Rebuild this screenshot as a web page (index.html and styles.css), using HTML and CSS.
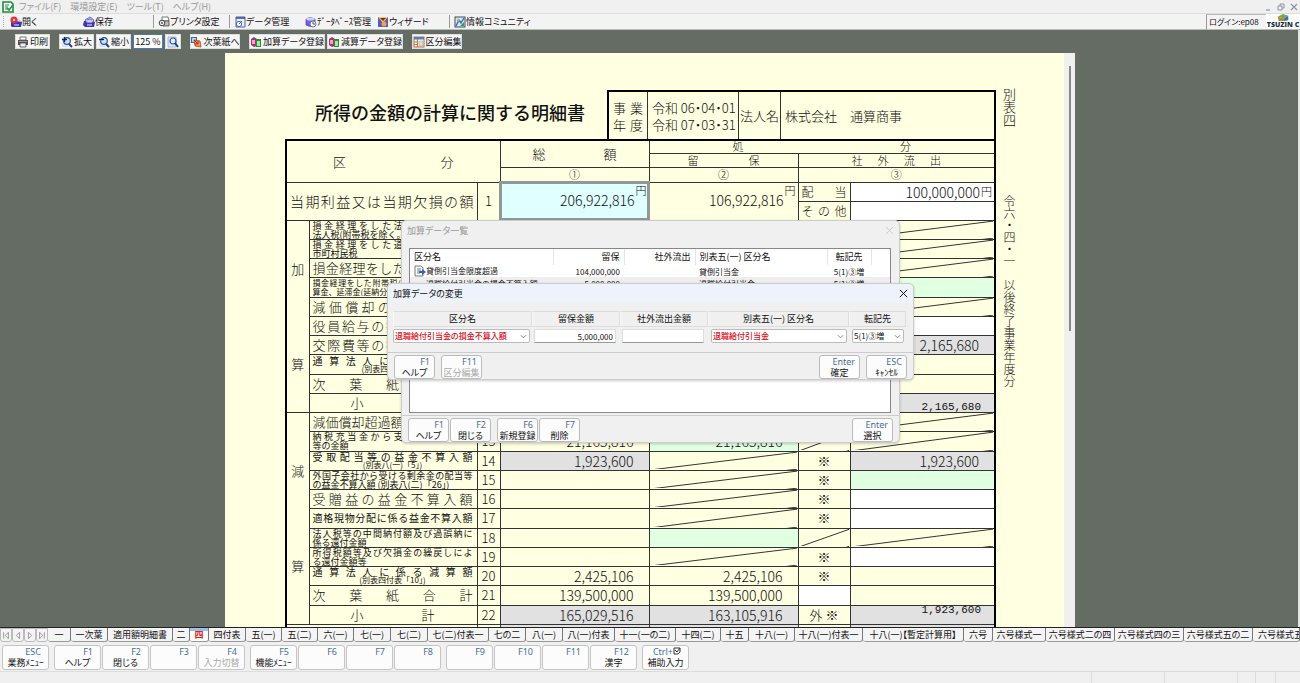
FILE: index.html
```html
<!DOCTYPE html>
<html lang="ja">
<head>
<meta charset="utf-8">
<title>別表四</title>
<link rel="stylesheet" href="styles.css">
</head>
<body>
<svg class="defs" aria-hidden="true">
  <symbol id="i-disk" viewBox="0 0 12 12"><path d="M1 5h8l3 1-1 5H2L0 9z" fill="#3b38a8"/><path d="M2 4l5-3 4 3-2 3H4z" fill="#c9ccf5" stroke="#4a48b8" stroke-width=".8"/><path d="M4 4l3-1 2 1" stroke="#6a68d0" fill="none"/><rect x="4" y="8" width="5" height="2" fill="#8f90e6"/></symbol>
  <symbol id="i-open" viewBox="0 0 12 12"><path d="M1 5h10l1 1-1 5H2L1 10z" fill="#3b38a8"/><path d="M5 5l4-3 3 4z" fill="#d4d6f8"/><circle cx="4" cy="4" r="3.5" fill="#e03040"/><circle cx="4" cy="4" r="1.2" fill="#ffc6c6"/><rect x="4" y="8" width="5" height="2" fill="#8f90e6"/></symbol>
  <symbol id="i-printset" viewBox="0 0 12 12"><path d="M4 1h6l1 4H4z" fill="#fff" stroke="#555" stroke-width=".8"/><path d="M3 5h8v5H5z" fill="#bbb" stroke="#444" stroke-width=".8"/><circle cx="4" cy="7" r="2.8" fill="#eee" stroke="#444"/><circle cx="4" cy="7" r="1" fill="#555"/></symbol>
  <symbol id="i-data" viewBox="0 0 12 12"><path d="M2 1h9v10H2z" fill="#e9ecfb" stroke="#4450a0" stroke-width=".9"/><path d="M2 2h9" stroke="#4450a0" stroke-width="1.6"/><circle cx="5" cy="8" r="2.6" fill="#fff" stroke="#3d65b8"/><path d="M5 8l3-3" stroke="#3d65b8"/></symbol>
  <symbol id="i-db" viewBox="0 0 12 12"><path d="M1 3q4-3 9 0v6q-4 3-9 0z" fill="#6f66d8" stroke="#3b38a8" stroke-width=".7"/><ellipse cx="5.5" cy="3" rx="4.3" ry="1.5" fill="#cfd0fa"/><circle cx="8" cy="8" r="3" fill="#f5f5ff" stroke="#5a58a8" stroke-width=".8"/><path d="M8 6v2h2" stroke="#333" fill="none" stroke-width=".8"/></symbol>
  <symbol id="i-wizard" viewBox="0 0 12 12"><rect x="1" y="1" width="10" height="10" fill="#5a58c8"/><path d="M1 1h10L6 7z" fill="#ffc55a"/><path d="M3 2l3 3 3-3" fill="#6b3a1a"/><circle cx="7" cy="8" r="2.5" fill="#e9a63a"/></symbol>
  <symbol id="i-info" viewBox="0 0 12 12"><rect x="1" y="1" width="10" height="10" fill="#d8ecff" stroke="#3a4a66"/><path d="M2 10l3-6 2 3 3-5" stroke="#2c6bc4" fill="none" stroke-width="1.4"/><circle cx="4" cy="4" r="1.5" fill="#f0b030"/><path d="M6 10l4-4v4z" fill="#37a050"/></symbol>
  <symbol id="i-print" viewBox="0 0 12 12"><path d="M3 1h6v3H3z" fill="#fff" stroke="#555" stroke-width=".8"/><path d="M1 4h10v5H1z" fill="#555"/><path d="M2 5h8v1H2z" fill="#999"/><path d="M3 7h6v4H3z" fill="#eee" stroke="#444" stroke-width=".8"/></symbol>
  <symbol id="i-zoomin" viewBox="0 0 12 12"><path d="M1 1h6v10H1z" fill="#dbe6fb"/><circle cx="6" cy="5" r="3.3" fill="#cfe0fb" stroke="#2a56a8" stroke-width="1.2"/><path d="M8 8l3 3" stroke="#1d3f8c" stroke-width="2"/><path d="M1 3.500h5M3.500 1v5" stroke="#123" stroke-width="1.3"/></symbol>
  <symbol id="i-zoomout" viewBox="0 0 12 12"><path d="M1 1h6v10H1z" fill="#dbe6fb"/><circle cx="6" cy="5" r="3.3" fill="#cfe0fb" stroke="#2a56a8" stroke-width="1.2"/><path d="M8 8l3 3" stroke="#1d3f8c" stroke-width="2"/><path d="M1 3.500h5" stroke="#123" stroke-width="1.3"/></symbol>
  <symbol id="i-zoom" viewBox="0 0 12 12"><path d="M1 1h8v10H1z" fill="#dbe6fb" stroke="#8aa6da" stroke-width=".8"/><circle cx="6" cy="5" r="3" fill="#e4effd" stroke="#2a56a8" stroke-width="1.2"/><path d="M8 7l3 4" stroke="#1d3f8c" stroke-width="2"/></symbol>
  <symbol id="i-next" viewBox="0 0 12 12"><path d="M1 1h6v6H1z" fill="#3a66b8"/><path d="M2 2h4v4H2z" fill="#b9d2fa"/><path d="M4 4l6 1 1 6-6-1z" fill="#f39a4a" stroke="#a8481a" stroke-width=".8"/><path d="M4 4l4 4M8 5v3H5" stroke="#c02020" fill="none"/></symbol>
  <symbol id="i-add" viewBox="0 0 12 12"><path d="M1 3l3-2 3 2v7l-3 1-3-2z" fill="#a33668"/><path d="M2 4h3v4H2z" fill="#f0a8c8"/><path d="M6 3h5v8H6z" fill="#2f8a40"/><path d="M7 5h3v5H7z" fill="#a4e8a4"/></symbol>
  <symbol id="i-table" viewBox="0 0 12 12"><rect x="1" y="1" width="10" height="10" fill="#fff" stroke="#b46a36"/><path d="M1 1h10v2.5H1z" fill="#4f82b8"/><path d="M4.500 3v8M1 6h4M1 8.500h4" stroke="#d07a36" stroke-width="1.2"/><path d="M6 5h4v5H6z" fill="#cfe2f6" stroke="#c8a080" stroke-width=".6"/></symbol>
  <symbol id="i-doc" viewBox="0 0 12 12"><path d="M1 1h6l2 2v8H1z" fill="#fff" stroke="#777"/><path d="M3 4h4M3 6h4M3 8h3" stroke="#555" stroke-width=".8"/><path d="M5 6h3V4l4 3-4 3V8H5z" fill="#2f5fd0"/></symbol>
  <symbol id="i-app" viewBox="0 0 12 12"><path d="M1 1h8l2 2v8H1z" fill="#fff" stroke="#1d8a3a" stroke-width="1.6"/><path d="M3 4h4M3 6h3M3 8h2" stroke="#1d8a3a"/><path d="M5 7l2 2 4-5" stroke="#1aa04a" stroke-width="1.8" fill="none"/></symbol>
  <symbol id="i-x" viewBox="0 0 10 10"><path d="M1 1l8 8M9 1l-8 8" stroke="currentColor" stroke-width="1.1"/></symbol>
</svg>
<div class="app">
  <nav class="menubar">
    <svg class="icon"><use href="#i-app"/></svg>
    <button>ファイル(F)</button><button>環境設定(E)</button><button>ツール(T)</button><button>ヘルプ(H)</button>
    <div class="winctl">
      <button aria-label="最小化"><svg viewBox="0 0 8 8"><path d="M2 7h4" stroke="currentColor" stroke-width="1.2"/></svg></button>
      <button aria-label="元に戻す"><svg viewBox="0 0 8 8"><path d="M1 3h4v4H1zM3 3V1h4v4H5" fill="none" stroke="currentColor"/></svg></button>
      <button aria-label="閉じる"><svg viewBox="0 0 8 8"><path d="M1 1l6 6M7 1L1 7" stroke="currentColor" stroke-width="1.2"/></svg></button>
    </div>
  </nav>
  <div class="toolbar">
    <span class="grip"></span>
    <button><svg class="icon"><use href="#i-open"/></svg>開く</button>
    <button><svg class="icon"><use href="#i-disk"/></svg>保存</button>
    <button class="sep"><svg class="icon"><use href="#i-printset"/></svg>プリンタ設定</button>
    <button class="sep"><svg class="icon"><use href="#i-data"/></svg>データ管理</button>
    <button><svg class="icon"><use href="#i-db"/></svg>ﾃﾞｰﾀﾍﾞｰｽ管理</button>
    <button><svg class="icon"><use href="#i-wizard"/></svg>ウィザード</button>
    <button class="sep"><svg class="icon"><use href="#i-info"/></svg>情報コミュニティ</button>
    <span class="login">ログイン:ep08</span>
    <div class="brand"><svg viewBox="0 0 14 8"><path d="M1 3l6-3 6 2-5 3z" fill="#79a84a"/><path d="M1 3l7 2v3H2z" fill="#b5862f"/><path d="M13 2L8 5v3l5-1z" fill="#3c6fae"/></svg><b>TSUZIN C</b></div>
  </div>

  <main class="workspace">
    <div class="actions">
      <div class="group"><button class="w-s"><svg class="icon"><use href="#i-print"/></svg>印刷</button></div>
      <div class="group">
        <button class="w-s"><svg class="icon"><use href="#i-zoomin"/></svg>拡大</button>
        <button class="w-s"><svg class="icon"><use href="#i-zoomout"/></svg>縮小</button>
        <input type="text" value="125 %" aria-label="倍率">
        <button class="w-i" aria-label="倍率変更"><svg class="icon"><use href="#i-zoom"/></svg></button>
      </div>
      <div class="group"><button class="w-m"><svg class="icon"><use href="#i-next"/></svg>次葉紙へ</button></div>
      <div class="group">
        <button class="w-l"><svg class="icon"><use href="#i-add"/></svg>加算データ登録</button>
        <button class="w-l"><svg class="icon"><use href="#i-add"/></svg>減算データ登録</button>
      </div>
      <div class="group"><button class="w-m"><svg class="icon"><use href="#i-table"/></svg>区分編集</button></div>
    </div>

    <div class="sheet">
      <div class="form">
        <header class="form-head">
          <h1>所得の金額の計算に関する明細書</h1>
          <div class="period">
            <div class="c-year"><span>事業</span><span>年度</span></div>
            <div class="c-date"><span>令和 06・04・01</span><span>令和 07・03・31</span></div>
            <div class="c-corp">法人名</div>
            <div class="c-name">株式会社　通算商事</div>
          </div>
        </header>
        <table class="ledger">
          <colgroup><col class="k-side"><col class="k-label"><col class="k-no"><col class="k-amt"><col class="k-amt"><col class="k-mark"><col class="k-out"></colgroup>
          <thead>
            <tr class="h1"><th colspan="3" rowspan="3"><div class="pair wide"><span>区</span><span>分</span></div></th><th rowspan="2"><div class="pair"><span>総</span><span>額</span></div></th><th colspan="3"><div class="pair small"><span>処</span><span>分</span></div></th></tr>
            <tr class="h2"><th><div class="pair small mid"><span>留</span><span>保</span></div></th><th colspan="2"><div class="pair small four"><span>社</span><span>外</span><span>流</span><span>出</span></div></th></tr>
            <tr class="h3"><th>①</th><th>②</th><th colspan="2">③</th></tr>
          </thead>
          <tbody class="first">
            <tr><td colspan="2" rowspan="2" class="lead"><p class="j">当期利益又は当期欠損の額</p></td><td rowspan="2" class="no">1</td>
              <td rowspan="2" class="cur"><div class="yen"><span>206,922,816</span><i>円</i></div></td>
              <td rowspan="2"><div class="yen"><span>106,922,816</span><i>円</i></div></td>
              <td class="kind"><p class="j">配当</p></td><td class="white"><div class="yen flat"><span>100,000,000</span><i>円</i></div></td></tr>
            <tr><td class="kind"><p class="j">その他</p></td><td class="white"></td></tr>
          </tbody>
          <tbody class="rows">
            <tr><td rowspan="10" class="side"><div><span>加</span><span>算</span></div></td><td class="two"><p class="j">損金経理をした法人税及び地方</p><p>法人税(附帯税を除く。)</p></td><td class="no">2</td><td></td><td></td><td></td><td class="diag"></td></tr>
            <tr><td class="two"><p class="j">損金経理をした道府県民税及び</p><p>市町村民税</p></td><td class="no">3</td><td></td><td></td><td></td><td class="diag"></td></tr>
            <tr><td><p class="j">損金経理をした納税充当金</p></td><td class="no">4</td><td></td><td></td><td></td><td class="diag"></td></tr>
            <tr><td class="two tiny"><p class="j">損金経理をした附帯税(利子税を除く)、加</p><p>算金、延滞金(延納分を除く)及び過怠税</p></td><td class="no">5</td><td></td><td></td><td></td><td class="green"></td></tr>
            <tr><td><p class="j">減価償却の償却超過額</p></td><td class="no">6</td><td></td><td></td><td></td><td class="diag"></td></tr>
            <tr><td><p class="j">役員給与の損金不算入額</p></td><td class="no">7</td><td></td><td></td><td></td><td class="white"></td></tr>
            <tr><td><p class="j">交際費等の損金不算入額</p></td><td class="no">8</td><td></td><td></td><td></td><td class="gray num">2,165,680</td></tr>
            <tr><td class="two sub"><p class="j">通算法人に係る加算額</p><p>(別表四付表「5」)</p></td><td class="no">9</td><td></td><td></td><td></td><td></td></tr>
            <tr><td><p class="j">次葉紙合計</p></td><td class="no">10</td><td></td><td></td><td></td><td></td></tr>
            <tr><td><div class="pair sum"><span>小</span><span>計</span></div></td><td class="no">11</td><td></td><td></td><td></td><td class="gray mini low">2,165,680</td></tr>
            <tr><td rowspan="11" class="side"><div><span>減</span><span>算</span></div></td><td><p class="j">減価償却超過額の当期認容額</p></td><td class="no">12</td><td></td><td></td><td></td><td class="diag"></td></tr>
            <tr><td class="two"><p class="j">納税充当金から支出した事業税</p><p>等の金額</p></td><td class="no">13</td><td class="num">21,165,816</td><td class="num green">21,165,816</td><td class="diag"></td><td class="diag"></td></tr>
            <tr><td class="two sub"><p class="j">受取配当等の益金不算入額</p><p>(別表八(一)「5」)</p></td><td class="no">14</td><td class="num gray">1,923,600</td><td class="diag"></td><td class="mark">※</td><td class="num gray">1,923,600</td></tr>
            <tr><td class="two"><p class="j">外国子会社から受ける剰余金の配当等</p><p>の益金不算入額 (別表八(二)「26」)</p></td><td class="no">15</td><td></td><td class="diag"></td><td class="mark">※</td><td class="green"></td></tr>
            <tr><td><p class="j">受贈益の益金不算入額</p></td><td class="no">16</td><td></td><td class="diag"></td><td class="mark">※</td><td class="white"></td></tr>
            <tr><td class="fit"><p class="j">適格現物分配に係る益金不算入額</p></td><td class="no">17</td><td></td><td class="diag"></td><td class="mark">※</td><td class="white"></td></tr>
            <tr><td class="two"><p class="j">法人税等の中間納付額及び過誤納に</p><p>係る還付金額</p></td><td class="no">18</td><td></td><td class="green"></td><td class="diag"></td><td class="diag"></td></tr>
            <tr><td class="two"><p class="j">所得税額等及び欠損金の繰戻しによ</p><p>る還付金額等</p></td><td class="no">19</td><td></td><td class="diag"></td><td class="mark">※</td><td class="white"></td></tr>
            <tr><td class="two sub"><p class="j">通算法人に係る減算額</p><p>(別表四付表「10」)</p></td><td class="no">20</td><td class="num">2,425,106</td><td class="num">2,425,106</td><td class="mark">※</td><td></td></tr>
            <tr><td><p class="j">次葉紙合計</p></td><td class="no">21</td><td class="num">139,500,000</td><td class="num">139,500,000</td><td class="white"></td><td></td></tr>
            <tr><td><div class="pair sum"><span>小</span><span>計</span></div></td><td class="no">22</td><td class="num gray">165,029,516</td><td class="num gray">163,105,916</td><td class="mark">外 ※</td><td class="gray mini high">1,923,600</td></tr>
            <tr><td colspan="2"></td><td class="no"></td><td class="gray"></td><td class="gray"></td><td></td><td class="gray"></td></tr>
          </tbody>
        </table>
      </div>
      <aside class="margin-note"><span class="n1">別表四</span><span class="n2">令六・四・一　以後終了事業年度分</span></aside>
      <div class="scroll"><span></span></div>
    </div>

    <section class="dialog list-dialog" aria-label="加算データ一覧">
      <div class="title"><span>加算データ一覧</span><button aria-label="閉じる"><svg><use href="#i-x"/></svg></button></div>
      <div class="list">
        <table>
          <colgroup><col class="l1"><col class="l2"><col class="l3"><col class="l4"><col class="l5"><col></colgroup>
          <thead><tr><th>区分名</th><th class="r">留保</th><th class="r">社外流出</th><th>別表五(一) 区分名</th><th class="c">転記先</th><th></th></tr></thead>
          <tbody>
            <tr><td><svg class="icon"><use href="#i-doc"/></svg>貸倒引当金限度超過</td><td class="r">104,000,000</td><td></td><td>貸倒引当金</td><td class="c">5(1)③増</td><td></td></tr>
            <tr class="sel"><td><span class="noicon"></span>退職給付引当金の損金不算入額</td><td class="r">5,000,000</td><td></td><td>退職給付引当金</td><td class="c">5(1)③増</td><td></td></tr>
          </tbody>
        </table>
      </div>
      <div class="keys">
        <div class="kg"><button class="key"><kbd>F1</kbd>ヘルプ</button><button class="key"><kbd>F2</kbd>閉じる</button></div>
        <div class="kg"><button class="key"><kbd>F6</kbd>新規登録</button><button class="key"><kbd>F7</kbd>削除</button></div>
        <div class="kg end"><button class="key"><kbd>Enter</kbd>選択</button></div>
      </div>
    </section>

    <section class="dialog edit-dialog" aria-label="加算データの変更">
      <div class="title"><span>加算データの変更</span><button aria-label="閉じる"><svg><use href="#i-x"/></svg></button></div>
      <div class="fields">
        <label for="f1">区分名</label><label for="f2">留保金額</label><label for="f3">社外流出金額</label><label for="f4">別表五(一) 区分名</label><label for="f5">転記先</label>
        <div><select id="f1" class="red"><option>退職給付引当金の損金不算入額</option></select></div>
        <div><input id="f2" type="text" value="5,000,000"></div>
        <div><input id="f3" type="text"></div>
        <div><select id="f4" class="red"><option>退職給付引当金</option></select></div>
        <div><select id="f5"><option>5(1)③増</option></select></div>
      </div>
      <div class="keys">
        <div class="kg"><button class="key"><kbd>F1</kbd>ヘルプ</button></div>
        <div class="kg"><button class="key" disabled><kbd>F11</kbd>区分編集</button></div>
        <div class="kg end"><button class="key"><kbd>Enter</kbd>確定</button></div>
        <div class="kg"><button class="key"><kbd>ESC</kbd>ｷｬﾝｾﾙ</button></div>
      </div>
    </section>
  </main>

  <div class="tabs">
    <button class="nav" aria-label="先頭"><svg viewBox="0 0 10 10"><path d="M2 1v8M8 1L4 5l4 4z" fill="none" stroke="#888"/></svg></button>
    <button class="nav" aria-label="前"><svg viewBox="0 0 10 10"><path d="M7 1L3 5l4 4z" fill="none" stroke="#888"/></svg></button>
    <button class="nav" aria-label="次"><svg viewBox="0 0 10 10"><path d="M3 1l4 4-4 4z" fill="none" stroke="#888"/></svg></button>
    <button class="nav" aria-label="末尾"><svg viewBox="0 0 10 10"><path d="M8 1v8M2 1l4 4-4 4z" fill="none" stroke="#888"/></svg></button>
    <button>一</button><button>一次葉</button><button>適用額明細書</button><button>二</button><button class="on">四</button><button>四付表</button><button>五(一)</button><button>五(二)</button><button>六(一)</button><button>七(一)</button><button>七(二)</button><button>七(二)付表一</button><button>七の二</button><button>八(一)</button><button>八(一)付表</button><button>十一(一の二)</button><button>十四(二)</button><button>十五</button><button>十八(一)</button><button>十八(一)付表一</button><button>十八(一)【暫定計算用】</button><button>六号</button><button>六号様式一</button><button>六号様式二の四</button><button>六号様式四の三</button><button>六号様式五の二</button><button class="cut">六号様式五</button>
  </div>
  <div class="fkeys">
    <div class="kg"><button class="key"><kbd>ESC</kbd>業務ﾒﾆｭｰ</button></div>
    <div class="kg"><button class="key"><kbd>F1</kbd>ヘルプ</button><button class="key"><kbd>F2</kbd>閉じる</button><button class="key"><kbd>F3</kbd></button><button class="key" disabled><kbd>F4</kbd>入力切替</button></div>
    <div class="kg"><button class="key"><kbd>F5</kbd>機能ﾒﾆｭｰ</button><button class="key"><kbd>F6</kbd></button><button class="key"><kbd>F7</kbd></button><button class="key"><kbd>F8</kbd></button></div>
    <div class="kg"><button class="key"><kbd>F9</kbd></button><button class="key"><kbd>F10</kbd></button><button class="key"><kbd>F11</kbd></button><button class="key"><kbd>F12</kbd>漢字</button></div>
    <div class="kg"><button class="key"><kbd>Ctrl+<svg viewBox="0 0 8 8"><path d="M1 1h6v4L5 7H1zM2 3l2 2 3-4" fill="none" stroke="#333"/></svg></kbd>補助入力</button></div>
  </div>
  <footer class="status"><span></span><span></span><span></span><span></span><span></span></footer>
</div>
</body>
</html>
```

FILE: styles.css
```css
* { box-sizing: border-box; }
body {
  margin: 0;
  background: #f0f0f0;
  color: #111;
  font-family: "Noto Sans CJK JP", "Liberation Sans", sans-serif;
  font-size: 9px;
  line-height: 12px;
  font-feature-settings: "palt";
}
button, input, select { font: inherit; font-feature-settings: inherit; color: inherit; margin: 0; padding: 0; }
button { border: 0; background: none; white-space: nowrap; }
p { margin: 0; }
.defs { position: absolute; width: 0; height: 0; }
.icon { width: 12px; height: 12px; flex: none; }

.app { height: 100vh; display: flex; flex-direction: column; overflow: hidden; }

/* Menu bar and main toolbar */
.menubar { height: 13px; flex: none; display: flex; align-items: center; gap: 9px; padding-left: 2px; color: #999; }
.menubar .icon { margin-right: -4px; }
.winctl { margin-left: auto; display: flex; gap: 5px; padding-right: 2px; color: #8a94a8; }
.winctl button { width: 8px; height: 8px; display: flex; }
.winctl svg { width: 8px; height: 8px; }

.toolbar {
  height: 17px; flex: none; display: grid; align-items: center;
  grid-template-columns: 10px 73px 70px 76px 76px 72px 72px 1fr auto auto;
  border-top: 1px solid #ddd; border-bottom: 1px solid #bbb; background: #f3f3f3;
}
.toolbar button { height: 13px; display: flex; align-items: center; font-size: 9px; }
.toolbar .sep { border-left: 1px solid #999; padding-left: 4px; }
.grip { height: 11px; margin-left: 3px; border-left: 1px dotted #aaa; }
.login { height: 15px; width: 60px; padding: 1px 2px; border-left: 1px solid #999; border-top: 1px solid #bbb; font-size: 8px; white-space: nowrap; }
.brand { width: 34px; height: 15px; overflow: hidden; background: #fff; display: flex; flex-direction: column; align-items: center; }
.brand svg { width: 14px; height: 7px; flex: none; }
.brand b { font-family: "Open Sans", sans-serif; font-size: 7px; line-height: 8px; font-weight: 800; color: #1c3444; white-space: nowrap; }

/* Workspace */
.workspace { flex: 1; min-height: 0; position: relative; overflow: hidden; background: #646c64; box-shadow: inset -2px 0 #e4e4e4; display: flex; flex-direction: column; align-items: center; }
.actions { align-self: stretch; height: 23px; flex: none; display: flex; gap: 9px; padding: 4px 0 4px 15px; }
.group { display: flex; gap: 2px; }
.actions button { height: 15px; display: flex; align-items: center; justify-content: center; gap: 1px; background: #f6f6f6; border: 1px solid #ddd; overflow: hidden; }
.actions input { width: 30px; height: 15px; border: 1px solid #4a78b0; background: #fff; text-align: center; }
.w-s { width: 35px; }
.w-i { width: 16px; }
.w-m { width: 50px; }
.w-l { width: 76px; }

.sheet { width: 850px; flex: 1; min-height: 0; display: flex; background: #ffffe1; overflow: hidden; }
.form { width: 771px; flex: none; padding: 37px 0 0 60px; }
.margin-note { flex: 1; padding: 35px 0 0 5px; display: flex; flex-direction: column; align-items: flex-start; font-feature-settings: normal; }
.margin-note span { writing-mode: vertical-rl; line-height: 16px; font-weight: 300; font-size: 13px; }
.margin-note .n1 { height: 107px; }
.margin-note .n2 { font-size: 12px; }
.scroll { width: 11px; background: #f0f0f0; display: flex; justify-content: center; padding-top: 13px; }
.scroll span { width: 2px; height: 265px; background: #888; }

.form-head { display: flex; justify-content: space-between; height: 49px; }
.form-head h1 { margin: 0; padding: 11px 0 0 30px; font-size: 18px; line-height: 22px; font-weight: 500; font-feature-settings: normal; white-space: nowrap; }
.period { width: 389px; display: flex; border: 2px solid #000; border-bottom: 0; font-size: 13px; line-height: 17px; font-weight: 300; }
.period div { display: flex; flex-direction: column; justify-content: center; border-right: 1px solid #333; white-space: nowrap; }
.period .c-name { border: 0; flex: 1; padding-left: 4px; font-feature-settings: normal; }
.c-year { width: 39px; padding: 0 4px; }
.c-year span { text-align-last: justify; }
.c-date { width: 91px; padding-left: 4px; }
.c-date span { font-size: 13px; }
.c-corp { width: 42px; align-items: center; }

/* Ledger */
.ledger { width: 711px; table-layout: fixed; border-collapse: collapse; border: 2px solid #000; font-weight: 300; font-feature-settings: normal; }
.ledger th, .ledger td { padding: 0; border: 1px solid #333; font-weight: 300; }
.k-side { width: 23px; }
.k-label { width: 168px; }
.k-no { width: 23px; }
.k-amt { width: 149px; }
.k-mark { width: 52px; }
.h1 { height: 13px; }
.h2 { height: 14px; }
.h3 { height: 15px; }
.ledger th { font-size: 11px; line-height: 11px; }
.pair { display: flex; justify-content: space-between; padding: 0 32px; font-size: 13px; }
.pair.wide { padding: 0 46px; }
.pair.small { font-size: 11px; padding: 0 83px; }
.pair.mid { padding: 0 38px; }
.pair.four { padding: 0 53px; }
.pair.sum { padding: 0 38px; }
.j { text-align-last: justify; white-space: nowrap; }

.first tr { height: 19px; }
.ledger .lead { padding: 0 3px; font-size: 14px; line-height: 18px; }
.ledger .kind { padding: 0 3px; font-size: 12px; line-height: 14px; }
.yen { display: flex; justify-content: flex-end; gap: 1px; padding-right: 2px; font-size: 14px; line-height: 16px; font-feature-settings: "palt"; }
.yen i { font-style: normal; font-size: 11px; line-height: 12px; width: 11px; }
.yen span { padding-top: 8px; }
.yen.flat { line-height: 14px; }
.yen.flat span { padding: 0; }
.yen:not(.flat) { height: 34px; }
.ledger .cur { background: #e0ffff; outline: 3px solid #909898; outline-offset: -2px; }

.rows tr { height: 19px; }
.rows tr:nth-child(4n) { height: 20px; }
.rows td { font-size: 13px; line-height: 16px; overflow: hidden; }
.rows td:not([class]), .rows td.two, .rows td.fit { padding: 0 4px 0 3px; }
.rows td.fit { font-size: 10px; font-weight: 400; }
.rows td.two { font-size: 9px; line-height: 9px; font-weight: 400; }
.rows td.tiny { font-size: 8px; }
.rows td.tiny p { white-space: nowrap; overflow: hidden; }
.rows td.sub { font-size: 10px; }
.rows td.sub p + p { font-size: 8px; line-height: 8px; text-align: center; }
.ledger td.no { font-size: 13px; text-align: center; }
.ledger td.num { font-size: 14px; text-align: right; padding-right: 15px; line-height: 16px; font-feature-settings: "palt"; }
.ledger td.mark { text-align: center; }
.ledger td.side { padding: 0; }
.side div { height: 190px; display: flex; flex-direction: column; align-items: center; justify-content: space-around; }
.ledger td.mini { font-family: "Liberation Mono", monospace; font-size: 11px; line-height: 9px; font-weight: 400; text-align: right; padding-right: 13px; }
.low { vertical-align: bottom; }
.high { vertical-align: top; }
.white { background: #fff; }
.green { background: #e1ffe1; }
.gray { background: #e1e1e1; }
.diag {
  background-image: url("data:image/svg+xml,%3Csvg xmlns='http://www.w3.org/2000/svg' viewBox='0 0 100 100' preserveAspectRatio='none'%3E%3Cpath d='M0 100L100 0' stroke='%23333' vector-effect='non-scaling-stroke'/%3E%3C/svg%3E");
  background-size: 100% 100%;
}

/* Dialogs float over the sheet */
.dialog { position: absolute; background: #f0f0f0; border: 1px solid #ccc; border-radius: 5px; box-shadow: 0 1px 3px rgba(0, 0, 0, .2); display: flex; flex-direction: column; }
.title { height: 19px; flex: none; display: flex; align-items: center; justify-content: space-between; padding: 0 5px; }
.title button { width: 9px; height: 9px; display: flex; }
.title svg { width: 9px; height: 9px; }
.list-dialog { width: 499px; height: 223px; left: calc(50% - 249px); top: 190px; }
.list-dialog .title { color: #999; }
.list-dialog .title button { color: #ccc; }
.edit-dialog { width: 527px; left: calc(50% - 263px); top: 253px; }
.edit-dialog .title { background: #eef2fb; border-radius: 5px 5px 0 0; }

.list { flex: 1; min-height: 0; margin: 8px 8px 2px 7px; background: #fff; border: 1px solid #888; overflow: hidden; }
.list table { width: 100%; table-layout: fixed; border-collapse: collapse; }
.l1 { width: 143px; }
.l2 { width: 71px; }
.l3 { width: 71px; }
.l4 { width: 132px; }
.l5 { width: 44px; }
.list th { height: 16px; padding: 0 4px; font-weight: 400; text-align: left; border-right: 1px solid #e4e4e4; white-space: nowrap; }
.list th:last-child { border: 0; }
.list td { height: 12px; line-height: 11px; padding: 0 4px; font-size: 8px; white-space: nowrap; }
.list td .icon { vertical-align: top; }
.noicon { display: inline-block; width: 12px; }
.list .r { text-align: right; }
.list .c { text-align: center; }
.list .sel { background: #eee; }

.keys { flex: none; display: flex; gap: 6px; padding: 2px 6px 0; border-top: 1px solid #ccc; }
.kg { display: flex; gap: 1px; }
.kg.end { margin-left: auto; }
.key { width: 41px; height: 24px; display: flex; flex-direction: column; align-items: center; background: #fcfcfc; border: 1px solid #bbb; border-radius: 3px; line-height: 11px; overflow: hidden; }
.key kbd { align-self: flex-end; padding-right: 4px; font-family: "Noto Sans", sans-serif; font-size: 9px; line-height: 11px; color: #4a6c98; }
.key:disabled { color: #aaa; }
.key kbd svg { width: 8px; height: 8px; }

.fields { display: grid; grid-template-columns: 139px 88px 88px 141px 57px; padding: 8px 5px 9px; }
.fields label { height: 16px; line-height: 14px; text-align: center; border: 1px solid #ddd; border-left-color: #f8f8f8; }
.fields div { padding: 2px 2px 0 0; }
.fields input, .fields select { width: 100%; height: 14px; font-size: 8px; background-color: #fff; border: 1px solid #ddd; border-bottom-color: #999; }
.fields input { text-align: right; padding-right: 2px; }
.fields div:nth-of-type(2), .fields div:nth-of-type(3) { padding: 2px 4px 0 2px; }
.fields div:nth-of-type(4) { padding-left: 3px; }
.fields div:nth-of-type(5) { padding-left: 3px; }
.fields select {
  appearance: none; border-color: #bbb; border-radius: 2px; padding-left: 1px; line-height: 12px;
  background-image: url("data:image/svg+xml,%3Csvg xmlns='http://www.w3.org/2000/svg' viewBox='0 0 8 8'%3E%3Cpath d='M1 2.5l3 3 3-3' fill='none' stroke='%23777'/%3E%3C/svg%3E");
  background-repeat: no-repeat; background-position: right 2px center; background-size: 7px 7px;
}
.fields .red { color: #d8101c; font-weight: 500; }

/* Sheet tabs */
.tabs {
  height: 15px; flex: none; display: grid; overflow: hidden; background: #f0f0f0; border-top: 1px solid #222;
  grid-template-columns: repeat(4, 12px) 23px 37px 65px 17px 19px 37px repeat(2, 36px) 36px repeat(2, 37px) 61px 37px 37px 52px 61px 45px 28px 46px 68px 101px 29px 53px 69px 69px 69px 1fr;
}
.tabs button { height: 14px; line-height: 12px; background: #f4f4f4; border-right: 1px solid #777; border-bottom: 1px solid #999; border-radius: 0 0 3px 3px; overflow: hidden; }
.tabs .nav { border: 1px solid #bbb; display: flex; align-items: center; justify-content: center; }
.tabs .nav svg { width: 8px; height: 9px; }
.tabs .on { color: #e02020; background: linear-gradient(#8fc4f0 3px, #fff 3px); font-weight: 700; }
.tabs .cut { text-align: left; padding-left: 5px; }

/* Function keys */
.fkeys { height: 30px; flex: none; display: flex; gap: 5px; padding: 3px 2px; border-bottom: 1px solid #ddd; }
.fkeys .key { width: 47px; height: 25px; border-color: #c4c4c4; }
.fkeys kbd { padding-right: 7px; }

.status { height: 11px; flex: none; display: flex; justify-content: flex-end; padding-right: 7px; }
.status span { border-left: 1px solid #ddd; width: 18px; }
.status span:nth-child(-n+2) { width: 73px; }
.status span:nth-child(4) { width: 20px; }
```
